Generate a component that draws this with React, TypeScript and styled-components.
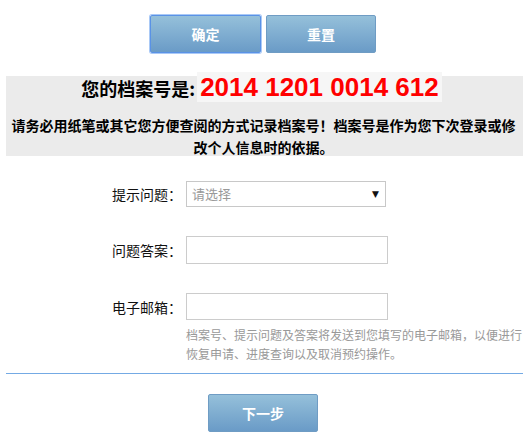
import React from "react";
import styled, { createGlobalStyle, css } from "styled-components";

const Global = createGlobalStyle`
  html, body { margin: 0; padding: 0; background: #fff; }
  body { font-family: "Noto Sans CJK SC", "Liberation Sans", sans-serif; color: #000; }
  * { box-sizing: border-box; }
`;

const Page = styled.div`
  width: 532px;
  padding: 0 9px 0 6px;
`;

const ButtonRow = styled.div`
  display: flex;
  justify-content: center;
  gap: 5px;
  padding-top: 15px;
  margin-left: -3px;
`;

const Btn = styled.button<{ $focused?: boolean }>`
  width: 110px;
  height: 38px;
  border: 1px solid #6f9cc4;
  border-radius: 2px;
  background: linear-gradient(#95c0da, #6a9bc7);
  color: #fff;
  font-family: "Noto Sans CJK SC", sans-serif;
  font-size: 14px;
  font-weight: bold;
  cursor: pointer;
  ${(p) =>
    p.$focused &&
    css`
      border: 1px solid #5a92e6;
      box-shadow: 0 0 0 1px #a9c9f6;
      width: 111px;
    `}
`;

const Notice = styled.div`
  margin-top: 23px;
  background: #ebebeb;
  text-align: center;
  height: 80px;
`;

const Title = styled.div`
  font-size: 18px;
  font-weight: bold;
  line-height: 20px;
  height: 24px;
  padding-top: 2px;
  margin-left: -6px;
`;

const Number = styled.span`
  display: inline-block;
  vertical-align: baseline;
  margin-left: 2px;
  padding: 0 3px;
  background: #f6f6f6;
  color: #ff0000;
  font-family: "Liberation Sans", Arial, sans-serif;
  font-size: 26px;
  line-height: 30px;
  font-weight: bold;
  margin-top: -8px;
`;

const Warning = styled.p`
  margin: 14px 0 0;
  font-size: 14px;
  font-weight: bold;
  line-height: 22px;
  padding: 0 2px 0 0;
`;

const Form = styled.div`
  display: grid;
  grid-template-columns: 176px 1fr;
  column-gap: 4px;
  row-gap: 29px;
  margin-top: 25px;
  align-items: center;
`;

const Label = styled.label`
  text-align: right;
  font-size: 14px;
  line-height: 20px;
  color: #111;
`;

const Select = styled.div`
  width: 200px;
  height: 26px;
  border: 1px solid #c8c8c8;
  display: flex;
  align-items: center;
  justify-content: space-between;
  padding: 0 6px 0 5px;
  font-size: 13px;
  line-height: 20px;
  color: #999;
`;

const Arrow = styled.span`
  color: #111;
  font-size: 9px;
  font-family: "DejaVu Sans", sans-serif;
`;

const Input = styled.div<{ $h: number }>`
  width: 202px;
  height: ${(p) => p.$h}px;
  border: 1px solid #cccccc;
  background: #fff;
`;

const Help = styled.div`
  grid-column: 2;
  width: 340px;
  margin-top: -24px;
  font-size: 12px;
  line-height: 19px;
  color: #999;
`;

const Divider = styled.div`
  margin-top: 10px;
  height: 1px;
  background: #74aae4;
`;

const Bottom = styled.div`
  display: flex;
  justify-content: center;
  padding-top: 20px;
  margin-left: -3px;
`;

export default function App() {
  return (
    <Page>
      <Global />
      <ButtonRow>
        <Btn $focused>确定</Btn>
        <Btn>重置</Btn>
      </ButtonRow>
      <Notice>
        <Title>
          您的档案号是:<Number>2014 1201 0014 612</Number>
        </Title>
        <Warning>
          请务必用纸笔或其它您方便查阅的方式记录档案号！档案号是作为您下次登录或修改个人信息时的依据。
        </Warning>
      </Notice>
      <Form>
        <Label>提示问题：</Label>
        <Select>
          <span>请选择</span>
          <Arrow>▼</Arrow>
        </Select>
        <Label>问题答案：</Label>
        <Input $h={28} />
        <Label>电子邮箱：</Label>
        <Input $h={27} />
        <Help>
          档案号、提示问题及答案将发送到您填写的电子邮箱，以便进行恢复申请、进度查询以及取消预约操作。
        </Help>
      </Form>
      <Divider />
      <Bottom>
        <Btn>下一步</Btn>
      </Bottom>
    </Page>
  );
}
